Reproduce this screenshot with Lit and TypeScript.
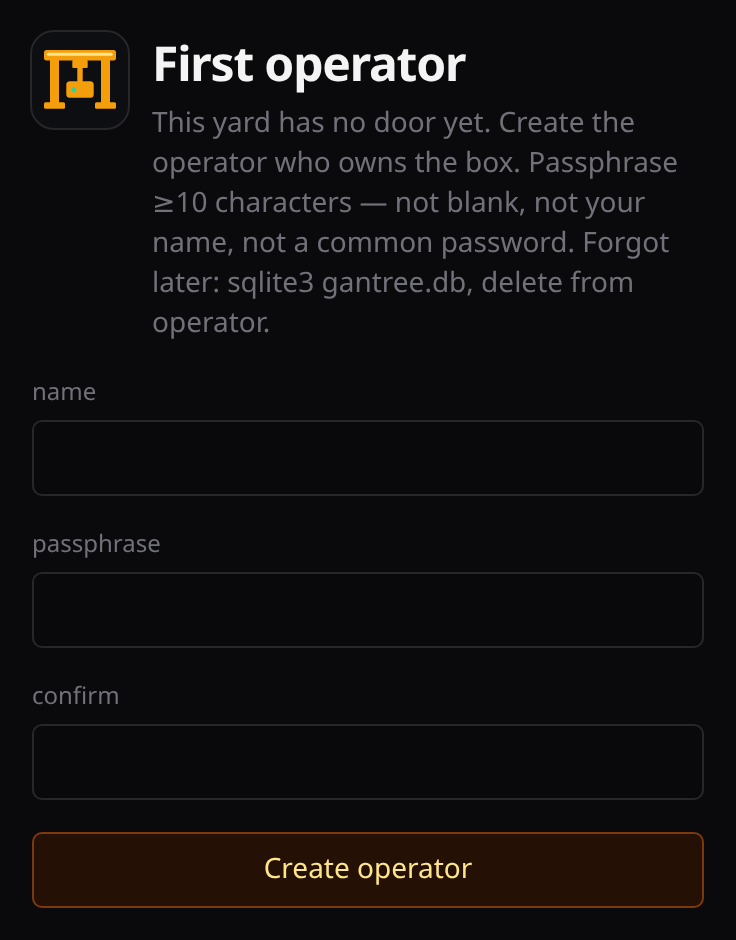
import { LitElement, html, css } from "lit";
import { customElement } from "lit/decorators.js";

@customElement("app-root")
export class AppRoot extends LitElement {
  static styles = css`
    :host { display: block; min-height: 940px; background: #0a0a0c; font-family: "Noto Sans", sans-serif; color: #71717a; }
    .page { display: flex; flex-direction: column; padding: 30px 32px 32px; will-change: transform; text-rendering: geometricPrecision; }
    .head { display: flex; align-items: flex-start; gap: 22px; margin-left: -2px; margin-bottom: 32px; }
    .logo { flex: none; width: 100px; height: 100px; box-sizing: border-box; border: 2px solid #27272a; border-radius: 24px; background: #0c0e12; overflow: hidden; }
    .logo svg { display: block; margin: -2px; width: 100px; height: 100px; }
    .copy { flex: 1; min-width: 0; }
    h1 { margin: 4px 0 8px; font-size: 48px; line-height: 60px; font-weight: 700; color: #f4f4f5; letter-spacing: -1.2px; }
    p { margin: 0; font-size: 28px; line-height: 40px; color: #71717a; }
    .sym { font-family: "DejaVu Sans", sans-serif; line-height: 0; }
    .field { display: flex; flex-direction: column; margin-bottom: 30px; }
    label { font-size: 24px; line-height: 36px; margin-bottom: 10px; color: #71717a; }
    input { box-sizing: border-box; height: 76px; width: 100%; background: #09090b; border: 2px solid #27272a; border-radius: 10px; outline: none; }
    button { height: 76px; width: 100%; margin-top: 2px; padding: 0 0 4px; box-sizing: border-box; background: #241005; border: 2px solid #7c3a0a; border-radius: 10px; color: #fde68a; font: 400 28px "Noto Sans", sans-serif; text-rendering: geometricPrecision; }
  `;

  render() {
    return html`
      <div class="page">
        <div class="head">
          <div class="logo">
            <svg viewBox="0 0 100 100" aria-hidden="true">
              <rect x="14" y="20" width="72" height="10.6" rx="2.5" fill="#f59e0b" />
              <rect x="16.7" y="22.7" width="66" height="3" rx="1.5" fill="#fde68a" />
              <rect x="20" y="30" width="9" height="44" fill="#f59e0b" />
              <rect x="71" y="30" width="9" height="44" fill="#f59e0b" />
              <rect x="14" y="72.3" width="21" height="6.4" rx="1.5" fill="#f59e0b" />
              <rect x="65" y="72.3" width="21" height="6.4" rx="1.5" fill="#f59e0b" />
              <rect x="42.3" y="30" width="15.4" height="8" rx="1" fill="#f59e0b" />
              <rect x="47.3" y="38" width="5.4" height="14" fill="#f59e0b" />
              <rect x="36.3" y="51.3" width="27.4" height="16.4" rx="3.5" fill="#f59e0b" />
              <circle cx="44" cy="60" r="2.5" fill="#34d399" />
            </svg>
          </div>
          <div class="copy">
            <h1>First operator</h1>
            <p>This yard has no door yet. Create the operator who owns the box. Passphrase <span class="sym">≥</span>10 characters — not blank, not your name, not a common password. Forgot later: sqlite3 gantree.db, delete from operator.</p>
          </div>
        </div>
        <div class="field"><label>name</label><input type="text" /></div>
        <div class="field"><label>passphrase</label><input type="password" /></div>
        <div class="field"><label>confirm</label><input type="password" /></div>
        <button>Create operator</button>
      </div>
    `;
  }
}
